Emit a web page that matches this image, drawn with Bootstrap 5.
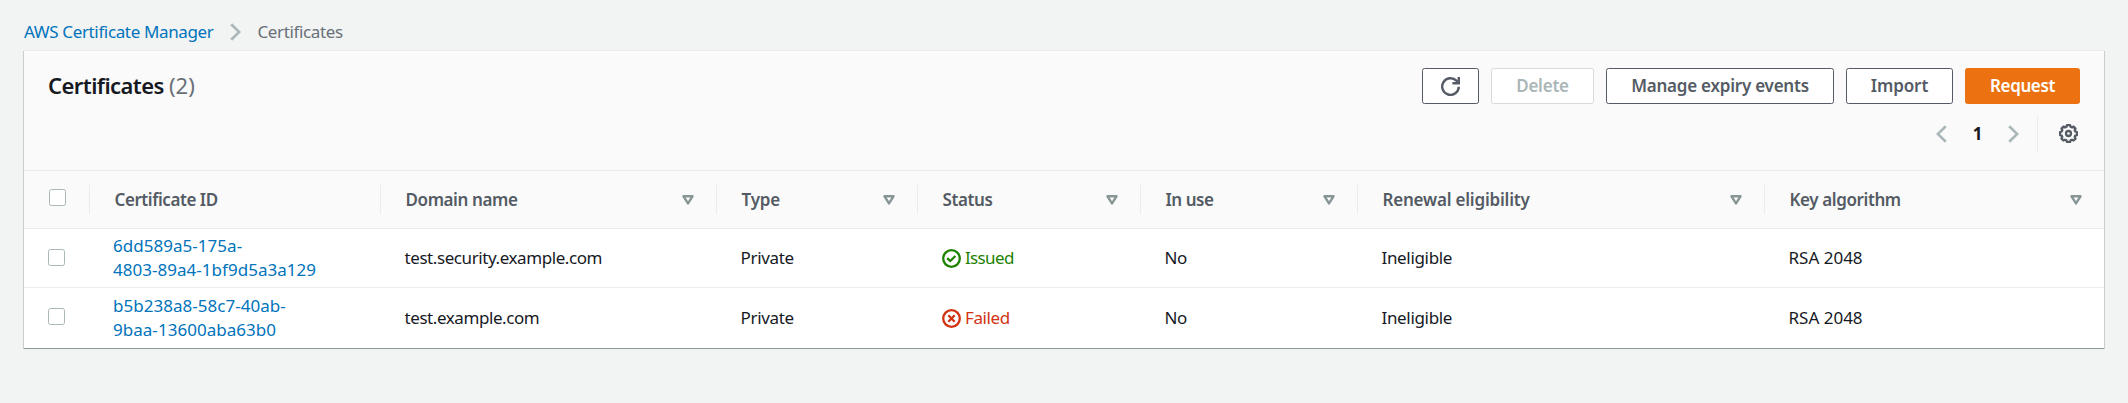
<!DOCTYPE html>
<html lang="en">
<head>
<meta charset="utf-8">
<meta name="viewport" content="width=device-width, initial-scale=1">
<title>AWS Certificate Manager</title>
<link href="https://cdn.jsdelivr.net/npm/bootstrap@5.3.0/dist/css/bootstrap.min.css" rel="stylesheet">
<style>
  body { background: #f2f3f3; color: #16191f; font: 17px/24px "Noto Sans", "Open Sans", sans-serif; }
  a { color: #0073bb; text-decoration: none; }
  svg { display: block; flex: none; }
  .page { padding: 20px 24px 0; }
  .crumbs { height: 24px; letter-spacing: -.36px; color: #687078; margin-bottom: 7px; }
  .crumbs svg { margin: 0 16px 0 17px; }
  .panel { background: #fff; border-bottom: 1px solid #8d9a9c; box-shadow: 0 1px 0 0 #c3cacb, 1px 0 0 0 #c9cfd0, -1px 0 0 0 #c9cfd0, 0 -1px 0 0 #eaeded; }
  .panel-top { background: #fafafa; height: 119px; padding: 17px 24px 0 24px; }
  h1 { font-size: 22px; line-height: 34px; font-weight: 600; letter-spacing: -.56px; }
  h1 span { font-weight: 400; color: #687078; letter-spacing: 0; }
  .btn { height: 36px; padding: 0 0 2px; border-radius: 2.5px; font-size: 17px; line-height: 31px; font-weight: 600; white-space: nowrap; text-align: center;
    --bs-btn-color: #545b64; --bs-btn-bg: #fff; --bs-btn-border-color: #545b64; --bs-btn-hover-bg: #fafafa; --bs-btn-hover-color: #16191f;
    --bs-btn-disabled-color: #aab7b8; --bs-btn-disabled-bg: #fff; --bs-btn-disabled-border-color: #d5dbdb; --bs-btn-disabled-opacity: 1; letter-spacing: -.23px; }
  .btn-refresh { width: 57px; padding: 0; }
  .btn-delete { width: 103px; }
  .btn-events { width: 228px; }
  .btn-import { width: 107px; letter-spacing: -.1px; }
  .btn-request { width: 115px; letter-spacing: -.4px; --bs-btn-color: #fff; --bs-btn-bg: #ec7211; --bs-btn-border-color: #ec7211; }
  .actions { gap: 12px; }
  .pager { height: 36px; margin-top: 12px; }
  .pager .page-num { width: 61px; text-align: center; font-weight: 700; line-height: 28px; }
  .pager .gear { border-left: 1px solid #eaeded; height: 36px; margin-left: 18px; padding: 8px 2px 0 21px; }
  .cert-table { table-layout: fixed; width: 2080px; border-collapse: separate; border-spacing: 0; }
  .cert-table th { height: 59px; background: #fafafa; border-top: 1px solid #eaeded; border-bottom: 1px solid #eaeded; padding: 0; color: #545b64; font-weight: 600; letter-spacing: -.4px; }
  .cert-table th > div { height: 29px; padding: 0 22.5px 0 24.5px; border-right: 1px solid #eaeded; }
  .cert-table th:last-child > div { border-right: 0; }
  .cert-table td { padding: 0 0 0 23.5px; height: 59px; border-bottom: 1px solid #eaeded; letter-spacing: -.42px; }
  .cert-table tr.last-row td { height: 60px; border-bottom: 0; }
  .cert-table td.pick { padding-left: 24px; }
  .form-check-input[type=checkbox] { display: block; width: 17px; height: 17px; margin: 0 0 1px; border: 1px solid #aab7b8; border-radius: 2.5px; }
  .form-check-input.tick[type=checkbox] { margin-bottom: 5px; }
  .last-row .form-check-input[type=checkbox] { margin-bottom: 3px; }
  .cert-table td.cert-id { letter-spacing: .03px; padding-left: 23px; }
  .cert-table td.kind, .cert-table td.renew { letter-spacing: -.33px; }
  .cert-table td.algo { letter-spacing: 0; }
  .cert-table th.tight { letter-spacing: -.45px; }
  .cert-table th.loose { letter-spacing: -.2px; }
  .state { gap: 4.5px; }
  .issued { color: #1d8102; letter-spacing: -.65px; }
  .failed { color: #d13212; letter-spacing: -.4px; }
</style>
</head>
<body>
<svg width="0" height="0" class="position-absolute" aria-hidden="true">
  <symbol id="sort" viewBox="0 0 12 10"><path d="M1.5 1.3h9L6 8.4z" fill="none" stroke="#879596" stroke-width="2.4" stroke-linejoin="round"/></symbol>
  <symbol id="next" viewBox="0 0 11 18"><path d="M1.2 1.2 9.2 9l-8 7.8" fill="none" stroke="#aab7b8" stroke-width="2.6"/></symbol>
</svg>
<main class="page">
  <nav class="crumbs d-flex align-items-center" aria-label="breadcrumb">
    <a href="#">AWS Certificate Manager</a>
    <svg width="11" height="18"><use href="#next"/></svg>
    <span>Certificates</span>
  </nav>
  <section class="panel">
    <header class="panel-top">
      <div class="d-flex justify-content-between">
        <h1 class="mb-0">Certificates <span>(2)</span></h1>
        <div class="actions d-flex">
          <button class="btn btn-refresh d-flex align-items-center justify-content-center" aria-label="Refresh"><svg width="19" height="19" viewBox="0 0 19 19" fill="none" stroke="#545b64" stroke-width="2.4"><path d="M17.8 9.8A8.3 8.3 0 1 1 15.4 3.7l2 2"/><path d="M17.8 0v6.3h-6.4"/></svg></button>
          <button class="btn btn-delete" disabled>Delete</button>
          <button class="btn btn-events">Manage expiry events</button>
          <button class="btn btn-import">Import</button>
          <button class="btn btn-request">Request</button>
        </div>
      </div>
      <div class="pager d-flex justify-content-end align-items-center">
        <svg width="11" height="18" viewBox="0 0 11 18"><path d="M9.8 1.2 1.8 9l8 7.8" fill="none" stroke="#aab7b8" stroke-width="2.6"/></svg>
        <span class="page-num">1</span>
        <svg width="11" height="18"><use href="#next"/></svg>
        <div class="gear"><svg width="19" height="19" viewBox="0 0 19 19" fill="none" stroke="#545b64" stroke-width="2.3"><path stroke-linejoin="round" d="M7.9 1.2h3.2l.5 1.6 1.3.6 1.7-.8 1.9 1.9-.8 1.7.6 1.3 1.6.5v3.1l-1.6.5-.6 1.3.8 1.7-1.9 1.9-1.7-.8-1.3.6-.5 1.6H7.9l-.5-1.6-1.3-.6-1.7.8-1.9-1.9.8-1.7-.6-1.3-1.6-.5V8l1.6-.5.6-1.3-.8-1.7 1.9-1.9 1.7.8 1.3-.6z"/><circle cx="9.5" cy="9.5" r="2.5"/></svg></div>
      </div>
    </header>
    <table class="cert-table">
      <colgroup><col style="width:66px"><col style="width:291px"><col style="width:336px"><col style="width:201px"><col style="width:223px"><col style="width:217px"><col style="width:407px"><col style="width:339px"></colgroup>
      <thead>
        <tr>
          <th><div class="d-flex align-items-center"><input class="form-check-input tick" type="checkbox" aria-label="Select all"></div></th>
          <th class="tight"><div class="d-flex align-items-center">Certificate ID</div></th>
          <th><div class="d-flex align-items-center justify-content-between">Domain name<svg width="12" height="10"><use href="#sort"/></svg></div></th>
          <th class="loose"><div class="d-flex align-items-center justify-content-between">Type<svg width="12" height="10"><use href="#sort"/></svg></div></th>
          <th><div class="d-flex align-items-center justify-content-between">Status<svg width="12" height="10"><use href="#sort"/></svg></div></th>
          <th class="tight"><div class="d-flex align-items-center justify-content-between">In use<svg width="12" height="10"><use href="#sort"/></svg></div></th>
          <th class="loose"><div class="d-flex align-items-center justify-content-between">Renewal eligibility<svg width="12" height="10"><use href="#sort"/></svg></div></th>
          <th><div class="d-flex align-items-center justify-content-between">Key algorithm<svg width="12" height="10"><use href="#sort"/></svg></div></th>
        </tr>
      </thead>
      <tbody>
        <tr>
          <td class="pick"><input class="form-check-input" type="checkbox" aria-label="Select certificate"></td>
          <td class="cert-id"><a href="#">6dd589a5-175a-<br>4803-89a4-1bf9d5a3a129</a></td>
          <td>test.security.example.com</td>
          <td class="kind">Private</td>
          <td><div class="state issued d-flex align-items-center"><svg width="19" height="19" viewBox="0 0 19 19" fill="none" stroke="currentColor" stroke-width="2.3"><circle cx="9.5" cy="9.5" r="8.3"/><path d="m5.2 9.2 3 2.8 5.2-5"/></svg>Issued</div></td>
          <td>No</td>
          <td class="renew">Ineligible</td>
          <td class="algo">RSA 2048</td>
        </tr>
        <tr class="last-row">
          <td class="pick"><input class="form-check-input" type="checkbox" aria-label="Select certificate"></td>
          <td class="cert-id"><a href="#">b5b238a8-58c7-40ab-<br>9baa-13600aba63b0</a></td>
          <td>test.example.com</td>
          <td class="kind">Private</td>
          <td><div class="state failed d-flex align-items-center"><svg width="19" height="19" viewBox="0 0 19 19" fill="none" stroke="currentColor" stroke-width="2.3"><circle cx="9.5" cy="9.5" r="8.3"/><path d="m6.3 6.3 6.4 6.4m0-6.4-6.4 6.4"/></svg>Failed</div></td>
          <td>No</td>
          <td class="renew">Ineligible</td>
          <td class="algo">RSA 2048</td>
        </tr>
      </tbody>
    </table>
  </section>
</main>
<script src="https://cdn.jsdelivr.net/npm/bootstrap@5.3.0/dist/js/bootstrap.bundle.min.js"></script>
</body>
</html>
